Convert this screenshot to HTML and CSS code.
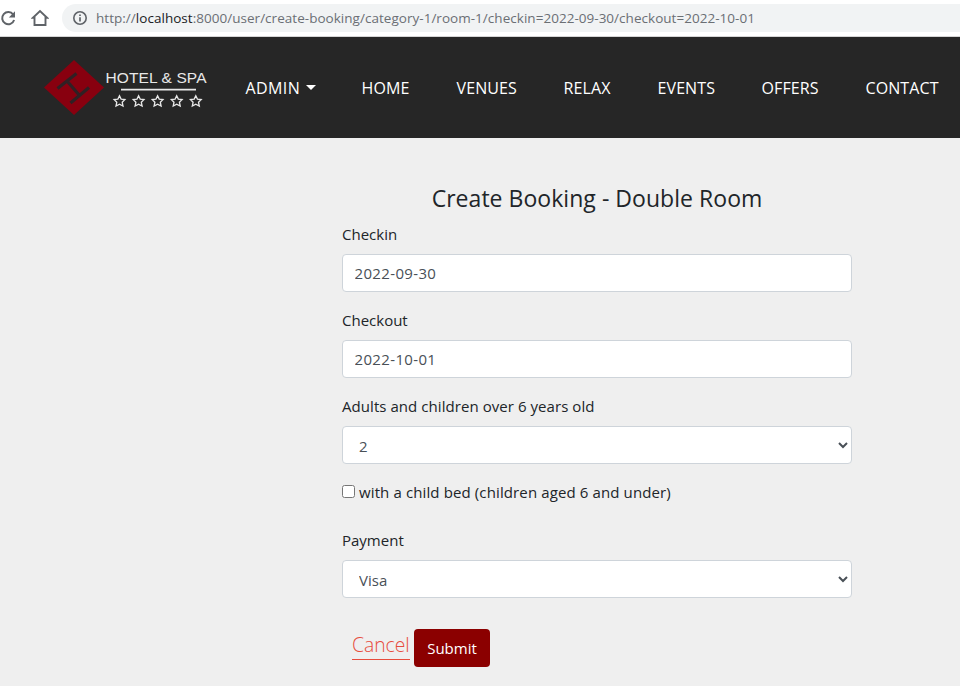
FILE: index.html
```
<!DOCTYPE html>
<html lang="en">
<head>
<meta charset="utf-8">
<title>Create Booking</title>
<link rel="stylesheet" href="styles.css">
</head>
<body>
<div class="browser-bar">
  <svg class="reload" width="16" height="18" viewBox="0 0 16 18" fill="none" stroke="#5f6368" stroke-width="2"><path d="M13.2 5.5A6.1 6.1 0 1 0 14.1 11"/><path d="M15 2.2v6.3H8.8z" fill="#5f6368" stroke="none"/></svg>
  <svg class="house" width="18" height="18" viewBox="0 0 18 18" fill="none" stroke="#5f6368" stroke-width="1.9"><path d="M3.5 8.7H1.9L9 2l7.1 6.7h-1.6V16h-11z"/></svg>
  <div class="address">
    <svg width="16" height="16" viewBox="0 0 16 16" fill="none" stroke="#5f6368" stroke-width="1.6"><circle cx="8" cy="8" r="6.2"/><path d="M8 7.2v4.2M8 4.4v1.7" stroke-width="1.7"/></svg>
    <span class="url">http://<b>localhost</b>:8000/user/create-booking/category-1/room-1/checkin=2022-09-30/checkout=2022-10-01</span>
  </div>
</div>
<nav class="navbar">
  <svg class="logo" width="170" height="61" viewBox="0 0 170 61">
    <path d="M31 3 61 30.500 31 58 1 30.500z" fill="#88000f"/>
    <path d="M14.500 31.500 33.500 16.500M27.500 46 46 30.500M24 24 37 39" stroke="#302024" stroke-width="3.200" fill="none"/>
    <text x="62.500" y="26.300" textLength="101" class="logo-text">HOTEL &amp; SPA</text>
    <path d="M78 32.700h75" stroke="#e8e8e8" stroke-width="1.700"/>
    <defs><path id="star" d="M0-5.300 1.600-1.900 5.400-1.500 2.700 1.200 3.500 5.100 0 3.200-3.500 5.100-2.700 1.200-5.400-1.500-1.600-1.900z" fill="none" stroke="#e8e8e8" stroke-width="1.300"/></defs>
    <use href="#star" x="76.500" y="44"/><use href="#star" x="95.600" y="44"/><use href="#star" x="114.600" y="44"/><use href="#star" x="133.700" y="44"/><use href="#star" x="152.800" y="44"/>
  </svg>
  <div class="links">
    <a class="admin">ADMIN<i class="caret"></i></a>
    <a class="home">HOME</a>
    <a class="venues">VENUES</a>
    <a class="relax">RELAX</a>
    <a class="events">EVENTS</a>
    <a class="offers">OFFERS</a>
    <a class="contact">CONTACT</a>
  </div>
</nav>
<main>
  <form>
    <h1>Create Booking - Double Room</h1>
    <div class="group">
      <label for="in">Checkin</label>
      <input class="control date" id="in" type="text" value="2022-09-30">
    </div>
    <div class="group">
      <label for="out">Checkout</label>
      <input class="control date" id="out" type="text" value="2022-10-01">
    </div>
    <div class="group">
      <label for="guests" class="long">Adults and children over 6 years old</label>
      <select class="control" id="guests"><option>2</option></select>
    </div>
    <div class="check"><input type="checkbox" id="bed"><label for="bed">with a child bed (children aged 6 and under)</label></div>
    <div class="group">
      <label for="pay">Payment</label>
      <select class="control" id="pay"><option>Visa</option></select>
    </div>
    <div class="actions"><a class="cancel">Cancel</a><button type="button" class="submit">Submit</button></div>
  </form>
</main>
</body>
</html>
```
FILE: styles.css
```
* { box-sizing: border-box; }
body {
  margin: 0;
  height: 686px;
  overflow: hidden;
  background: #efefef;
  color: #212529;
  font: 15px/24px "Open Sans", "Noto Sans", sans-serif;
}
svg { display: block; flex: none; }
.browser-bar {
  height: 37px;
  display: flex;
  align-items: flex-start;
  background: #fff;
  border-bottom: 1px solid #d5d5d5;
}
.reload { margin: 9px 0 0 0; }
.house { margin: 9px 0 0 15px; }
.address {
  flex: 1;
  height: 28px;
  margin: 4px 0 0 13px;
  padding-left: 10px;
  display: flex;
  align-items: center;
  gap: 8px;
  background: #f1f3f4;
  border-radius: 14px 0 0 14px;
}
.url { font-size: 13.5px; letter-spacing: 0.03px; color: #6b6f74; white-space: nowrap; }
.url b { font-weight: 400; color: #202124; }
.navbar {
  height: 101px;
  display: flex;
  align-items: center;
  padding-left: 43px;
  background: #262626;
}
.logo-text { font: 15.500px "Liberation Sans", Arial, sans-serif; fill: #e8e8e8; }
.links { display: flex; gap: 46px; margin-left: 32.5px; color: #fff; font-size: 16px; letter-spacing: 0.1px; }
.links a { display: flex; white-space: nowrap; }
.admin { width: 70px; letter-spacing: 0.4px; }
.home { width: 49px; }
.venues { width: 61px; }
.relax { width: 48px; }
.events { width: 58px; }
.offers { width: 58px; }
.contact { width: 75px; }
.caret {
  margin: 9px 0 0 auto;
  width: 10px;
  height: 5px;
  border: 5px solid transparent;
  border-top-color: #fff;
  border-bottom: 0;
}
form { width: 510px; margin: 44px 0 0 342px; }
h1 { margin: 0 0 8px; font-size: 23px; line-height: 32px; font-weight: 400; letter-spacing: 0.04px; text-align: center; white-space: nowrap; }
.group { margin-bottom: 16px; }
.group label { display: block; height: 24px; margin-bottom: 8px; }
.group .long { letter-spacing: 0.06px; }
.control {
  display: block;
  width: 100%;
  height: 38px;
  padding: 6px 12px;
  border: 1px solid #ced4da;
  border-radius: 4px;
  background: #fff;
  color: #495057;
  font: inherit;
}
.date { padding-left: 11.5px; letter-spacing: 0.35px; }
select.control { padding-bottom: 5px; }
.check { display: flex; align-items: center; height: 24px; margin-bottom: 24px; letter-spacing: 0.12px; }
.check input { width: 13px; height: 13px; margin: 0 4px 2px 0; }
.actions { display: flex; align-items: flex-start; padding: 15px 0 0 10px; }
.cancel {
  width: 58px;
  height: 31px;
  margin-right: 4px;
  border-bottom: 1px solid #e74c3c;
  color: #e74c3c;
  font-size: 19.3px;
  font-weight: 300;
  line-height: 32px;
}
.submit {
  width: 76px;
  height: 38px;
  padding: 0;
  border: 0;
  border-radius: 4px;
  background: #8b0000;
  color: #fff;
  font: inherit;
}
```
